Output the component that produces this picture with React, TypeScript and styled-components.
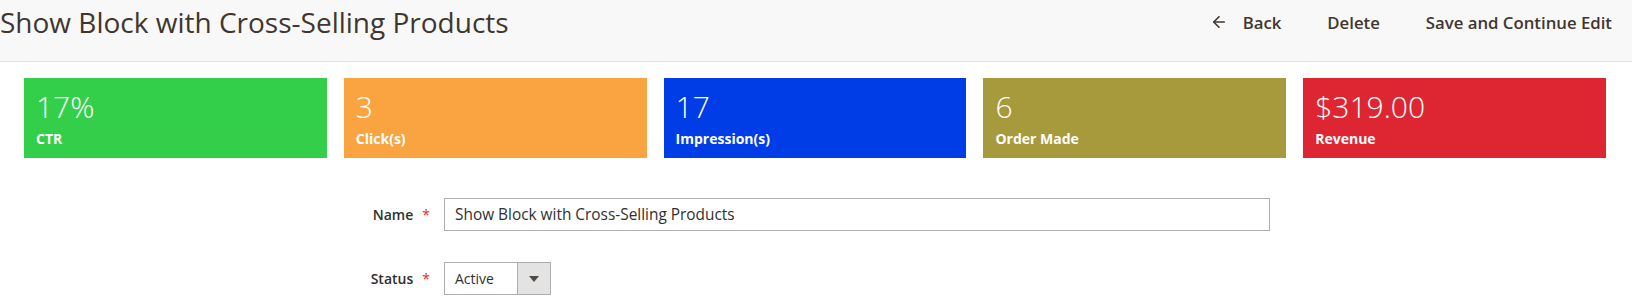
import styled, { createGlobalStyle } from "styled-components";
import { ArrowLeft } from "lucide-react";

const GlobalStyle = createGlobalStyle`
  body {
    margin: 0;
    background: #ffffff;
    font-family: "Open Sans", "Liberation Sans", sans-serif;
    color: #303030;
  }
`;

const Header = styled.header`
  height: 61px;
  background: #f8f8f8;
  border-bottom: 1px solid #e3e3e3;
  display: flex;
  align-items: flex-start;
  justify-content: space-between;
  padding-right: 8px;
`;

const PageTitle = styled.h1`
  margin: 0;
  height: 44px;
  display: flex;
  align-items: center;
  font-size: 28px;
  font-weight: 400;
  color: #41362f;
`;

const Actions = styled.div`
  display: flex;
  align-items: center;
  height: 44px;
  gap: 22px;
`;

const ActionButton = styled.button`
  display: flex;
  align-items: center;
  gap: 15px;
  border: none;
  background: transparent;
  padding: 0 12px;
  font-family: "Open Sans", "Liberation Sans", sans-serif;
  font-size: 16.75px;
  font-weight: 600;
  color: #41362f;
  cursor: pointer;
`;

const Stats = styled.section`
  display: flex;
  gap: 17px;
  padding: 16px 26px 0 24px;
`;

const StatCard = styled.div<{ $bg: string }>`
  flex: 1;
  height: 80px;
  box-sizing: border-box;
  padding: 11px 12px 0;
  background: ${(p) => p.$bg};
  color: #ffffff;
`;

const StatValue = styled.div`
  font-size: 30px;
  font-weight: 300;
  line-height: 1.2;
`;

const StatLabel = styled.div`
  margin-top: 4px;
  font-size: 14px;
  font-weight: 700;
  line-height: 1.4;
`;

const Form = styled.form`
  display: flex;
  flex-direction: column;
  gap: 31px;
  padding-top: 40px;
`;

const Field = styled.div`
  display: grid;
  grid-template-columns: 430px auto;
  column-gap: 14px;
  align-items: center;
`;

const Label = styled.label`
  text-align: right;
  font-size: 14px;
  font-weight: 600;
  color: #303030;
`;

const Required = styled.span`
  margin-left: 9px;
  color: #e22626;
  font-weight: 400;
`;

const TextInput = styled.input`
  width: 826px;
  height: 33px;
  box-sizing: border-box;
  border: 1px solid #adadad;
  padding: 0 10px;
  font-family: "Open Sans", "Liberation Sans", sans-serif;
  font-size: 15.4px;
  color: #303030;
  outline: none;
`;

const Select = styled.div`
  width: 107px;
  height: 33px;
  box-sizing: border-box;
  border: 1px solid #adadad;
  display: flex;
  font-size: 14px;
  color: #303030;
`;

const SelectValue = styled.span`
  flex: 1;
  display: flex;
  align-items: center;
  padding-left: 10px;
`;

const SelectArrow = styled.span`
  width: 32px;
  background: #e3e3e3;
  border-left: 1px solid #adadad;
  display: flex;
  align-items: center;
  justify-content: center;
  &::after {
    content: "";
    border-left: 5px solid transparent;
    border-right: 5px solid transparent;
    border-top: 6px solid #514943;
  }
`;

const stats = [
  { value: "17%", label: "CTR", color: "#33cf4a" },
  { value: "3", label: "Click(s)", color: "#f9a441" },
  { value: "17", label: "Impression(s)", color: "#003de6" },
  { value: "6", label: "Order Made", color: "#a79a3c" },
  { value: "$319.00", label: "Revenue", color: "#de2633" },
];

export default function App() {
  return (
    <>
      <GlobalStyle />
      <Header>
        <PageTitle>Show Block with Cross-Selling Products</PageTitle>
        <Actions>
          <ActionButton>
            <ArrowLeft size={18} strokeWidth={2.2} />
            Back
          </ActionButton>
          <ActionButton>Delete</ActionButton>
          <ActionButton>Save and Continue Edit</ActionButton>
        </Actions>
      </Header>
      <Stats>
        {stats.map((s) => (
          <StatCard key={s.label} $bg={s.color}>
            <StatValue>{s.value}</StatValue>
            <StatLabel>{s.label}</StatLabel>
          </StatCard>
        ))}
      </Stats>
      <Form>
        <Field>
          <Label>
            Name<Required>*</Required>
          </Label>
          <TextInput defaultValue="Show Block with Cross-Selling Products" />
        </Field>
        <Field>
          <Label>
            Status<Required>*</Required>
          </Label>
          <Select>
            <SelectValue>Active</SelectValue>
            <SelectArrow />
          </Select>
        </Field>
      </Form>
    </>
  );
}
